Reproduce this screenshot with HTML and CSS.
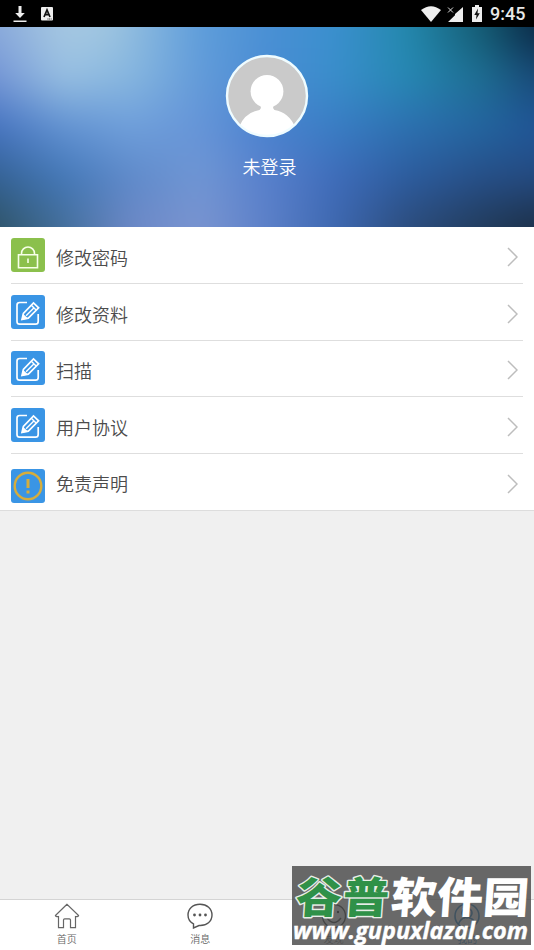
FILE: index.html
```html
<!DOCTYPE html>
<html lang="zh-CN">
<head>
<meta charset="utf-8">
<title>我的</title>
<link rel="stylesheet" href="styles.css">
</head>
<body>
<svg class="defs" width="0" height="0">
  <symbol id="edit" viewBox="0 0 34 34"><rect width="34" height="34" rx="3" fill="#3a95e5"/><g fill="none" stroke="#fff" stroke-width="1.7"><path d="M16 7.5H8.7Q6 7.5 6 10.2V26.5Q6 29.2 8.7 29.2H24.5Q27.2 29.2 27.2 26.5V19"/><path d="M11 24.5L12.4 18.3L22.5 7.9L27.6 12.8L17.3 23.2Z"/><path d="M20.3 10.3L25.3 15.2M15.1 20.8L22.8 12.9" stroke-width="1.4"/></g><path d="M10.7 25L12 18.8L17 23.4Z" fill="#fff"/></symbol>
  <symbol id="arrow" viewBox="0 0 11 20"><path d="M1 1L10 10L1 19" fill="none" stroke="#bdbdbd" stroke-width="1.5"/></symbol>
</svg>
<div class="screen">
  <div class="status">
    <svg class="download" width="14" height="18" viewBox="0 0 14 18"><path d="M5.5 1h3v7h3.3L7 13 2.2 8h3.3zM.5 15.5h13V17H.5z" fill="#eee"/></svg>
    <svg class="lang" width="12" height="14" viewBox="0 0 12 14"><rect width="12" height="13.5" rx="1" fill="#eee"/><path d="M3 10L6 3L9 10M4.3 7.7H7.7" fill="none" stroke="#111" stroke-width="1.7"/><path d="M6.5 12h4" stroke="#111" stroke-dasharray="1 .7"/></svg>
    <div class="status-right">
      <svg width="20" height="16" viewBox="0 0 20 16"><path d="M0 4Q10-3.7 20 4L10 16Z" fill="#eee"/></svg>
      <svg class="signal" width="16" height="16" viewBox="0 0 16 16"><path d="M16 1V16H1L8 9.2V8Z" fill="#eee"/><path d="M1 1.5l5 5M6 1.5l-5 5" stroke="#ddd"/></svg>
      <svg class="battery" width="10" height="17" viewBox="0 0 10 17"><path d="M3 0h4v2h3v15H0V2h3z" fill="#eee"/><path d="M6 3.5L2.3 10h2.2L4 14.5L7.8 8.2H5.5z" fill="#111"/></svg>
      <span class="clock">9:45</span>
    </div>
  </div>
  <header class="hero">
    <div class="backdrop"><i class="wash w0"></i><i class="wash w1"></i><i class="wash w2"></i><i class="wash w3"></i><i class="wash w4"></i></div>
    <svg class="avatar" width="84" height="84" viewBox="0 0 84 84"><defs><clipPath id="face"><circle cx="42" cy="42" r="40"/></clipPath></defs><circle cx="42" cy="42" r="40" fill="#cacaca"/><g clip-path="url(#face)" fill="#fff"><circle cx="42" cy="37.3" r="16.4"/><path d="M33 48Q38 53 34.5 56Q20 58.5 14 73V84H70V73Q64 58.5 49.5 56Q46 53 51 48Z"/></g><circle cx="42" cy="42" r="40" fill="none" stroke="#effcff" stroke-width="2.4"/></svg>
    <div class="name">未登录</div>
  </header>
  <main class="list">
    <div class="row"><svg class="icon" viewBox="0 0 34 34"><rect width="34" height="34" rx="3" fill="#8bc04c"/><g fill="none" stroke="#f7ffe8" stroke-width="1.6"><path d="M7.5 16.8H26.5V29.8H7.5ZM10.5 16.8V15.5A6.5 6.5 0 0 1 23.5 15.5V16.8"/><path d="M17 20.5v4.5"/></g></svg><span>修改密码</span><svg class="chevron"><use href="#arrow"/></svg></div>
    <div class="row"><svg class="icon"><use href="#edit"/></svg><span>修改资料</span><svg class="chevron"><use href="#arrow"/></svg></div>
    <div class="row"><svg class="icon"><use href="#edit"/></svg><span>扫描</span><svg class="chevron"><use href="#arrow"/></svg></div>
    <div class="row"><svg class="icon"><use href="#edit"/></svg><span>用户协议</span><svg class="chevron"><use href="#arrow"/></svg></div>
    <div class="row last"><svg class="icon" viewBox="0 0 34 34"><rect width="34" height="34" rx="3" fill="#3a95e5"/><circle cx="17" cy="17" r="13.3" fill="none" stroke="#d6ad3c" stroke-width="2.4"/><path d="M17 10v9M17 21.5v3" stroke="#d6ad3c" stroke-width="3"/></svg><span>免责声明</span><svg class="chevron"><use href="#arrow"/></svg></div>
  </main>
  <nav class="tabs">
    <div class="tab"><svg width="26" height="26" viewBox="0 0 26 26"><path d="M13 1.3L1.4 12.5Q1.5 13.8 4.5 13.5V24.7H9.5V17Q9.5 15.8 10.7 15.8H15.3Q16.5 15.8 16.5 17V24.7H21.5V13.5Q24.5 13.8 24.6 12.5Z" fill="none" stroke="#666" stroke-width="1.2"/></svg><span>首页</span></div>
    <div class="tab"><svg width="26" height="26" viewBox="0 0 26 26"><path d="M6.5 20.9V25L12 22.5C20 23 25 18 25 12C25 5.5 20 1.2 13 1.2S1 5.5 1 12C1 16 3 19 6.5 20.9Z" fill="none" stroke="#555" stroke-width="1.4"/><g fill="#555"><circle cx="7.5" cy="12" r="1.4"/><circle cx="13" cy="12" r="1.4"/><circle cx="18.5" cy="12" r="1.4"/></g></svg><span>消息</span></div>
    <div class="tab"><svg width="26" height="26" viewBox="0 0 26 26"><g fill="none" stroke="#222" stroke-width="1.4"><circle cx="13" cy="13" r="11.5"/><path d="M6 15Q13 24 20 15"/></g><circle cx="9" cy="9" r="1.2"/><circle cx="17" cy="9" r="1.2"/></svg><span>发现</span></div>
    <div class="tab active"><svg width="26" height="26" viewBox="0 0 26 26"><g fill="none" stroke="currentColor" stroke-width="1.6"><circle cx="13" cy="13" r="12"/><circle cx="13" cy="10" r="5"/><path d="M4.5 21Q7 15 11 15M21.5 21Q19 15 15 15"/></g></svg><span>我的</span></div>
  </nav>
  <div class="watermark">
    <svg width="239" height="79" viewBox="0 0 239 79">
      <g class="brand"><text class="green" x="3" y="0" transform="translate(0 47) skewX(-4) scale(1 .93)" textLength="93">谷普</text><text class="white" x="98" y="0" transform="translate(0 47) skewX(-4) scale(1 .93)" textLength="138">软件园</text></g>
      <text class="url" x="1" y="73" textLength="235" lengthAdjust="spacingAndGlyphs">www.gupuxlazal.com</text>
    </svg>
  </div>
</div>
</body>
</html>
```
FILE: styles.css
```css
* { box-sizing: border-box; }
body { margin: 0; font-family: "Noto Sans CJK SC", sans-serif; }
.defs { position: absolute; }
.screen { position: relative; width: 534px; height: 950px; background: #f0f0f0; display: flex; flex-direction: column; overflow: hidden; }
.screen svg { display: block; flex: none; }
.status { position: relative; height: 27px; flex: none; background: #000; display: flex; align-items: center; padding: 0 9px 0 13px; }
.lang { margin-left: 14px; }
.status-right { margin-left: auto; display: flex; align-items: center; }
.signal { margin-left: 6px; }
.battery { margin: 0 8px 0 9px; }
.clock { font: 500 18px/27px Roboto, sans-serif; color: #e8e8e8; width: 35px; white-space: nowrap; }
.hero { position: relative; height: 200px; flex: none; display: flex; flex-direction: column; align-items: center; padding-top: 27px; overflow: hidden; }
.backdrop { position: absolute; inset: -40px; filter: blur(14px); }
.wash { position: absolute; left: 0; right: 0; bottom: 0; }
.w0 { top: 0; background: linear-gradient(90deg, #86a6da 4%, #a6c8e2 17%, #a0c6e0 24%, #5f9edb 39%, #4a90d4 50%, #3b90cf 61%, #2388ac 73%, #145b72 85%, #0a2844 94%); }
.w1 { top: 40px; background: linear-gradient(90deg, #7090d4 4%, #98c0e2 17%, #86b6df 28%, #639bd9 39%, #4a8cd4 50%, #3a8ecb 61%, #2688b3 73%, #1e6e92 85%, #194a78 94%); }
.w2 { top: 90px; background: linear-gradient(90deg, #4270be 4%, #6292d2 17%, #6f9fdb 28%, #6695d8 39%, #4a82cf 50%, #3a7dc4 61%, #2d70b0 73%, #2465a0 85%, #205698 94%); }
.w3 { top: 140px; background: linear-gradient(90deg, #325f90 4%, #4478b8 17%, #5f8aca 28%, #7096d4 39%, #5880cc 50%, #3f6cba 61%, #2d5c9e 73%, #274f88 85%, #254a80 94%); }
.w4 { top: 190px; background: linear-gradient(90deg, #2c5060 4%, #446f9b 17%, #6c88c6 28%, #7a94d0 39%, #5c80c8 50%, #3e68b0 61%, #2c4c7c 73%, #223c5c 85%, #1c3048 94%); }
.w1, .w2, .w3, .w4 { mask-image: linear-gradient(transparent, #000 50px); }
.avatar, .name { position: relative; }
.name { margin-top: 14px; padding-left: 5px; color: #fff; font-size: 18px; line-height: 28px; font-weight: 350; }
.list { flex: none; height: 284px; background: #fff; border-bottom: 1px solid #ddd; padding: 0 11px; }
.row { height: 56.8px; border-bottom: 1px solid #dedede; display: flex; align-items: center; color: #4c4c4c; font-size: 18px; font-weight: 350; }
.row span { margin-left: 11px; padding-top: 4px; line-height: 28px; }
.last { border: 0; }
.last .icon { margin-top: 6px; }
.last span { padding-top: 0; }
.icon { width: 34px; height: 34px; }
.chevron { width: 11px; height: 20px; margin: 4px 5px 0 auto; }
.last .chevron { margin-top: 3px; }
.tabs { margin-top: auto; height: 51px; background: #fff; border-top: 1px solid #d4d4d4; display: flex; }
.tab { flex: 1; display: flex; flex-direction: column; align-items: center; padding-top: 3px; color: #666; font-size: 10px; line-height: 20px; font-weight: 350; }
.active { color: #0070c0; }
.watermark { position: absolute; left: 292px; top: 866px; width: 239px; height: 79px; background: rgba(76, 76, 76, .84); }
.brand { font: 900 46px "Noto Sans CJK SC", sans-serif; paint-order: stroke; stroke-linejoin: round; }
.green { fill: #2f9148; stroke: #e7eee7; stroke-width: 3px; }
.white { fill: #fff; }
.url { font: italic 700 24px "Open Sans", sans-serif; fill: #fff; stroke: #fff; stroke-width: .4px; }
```
